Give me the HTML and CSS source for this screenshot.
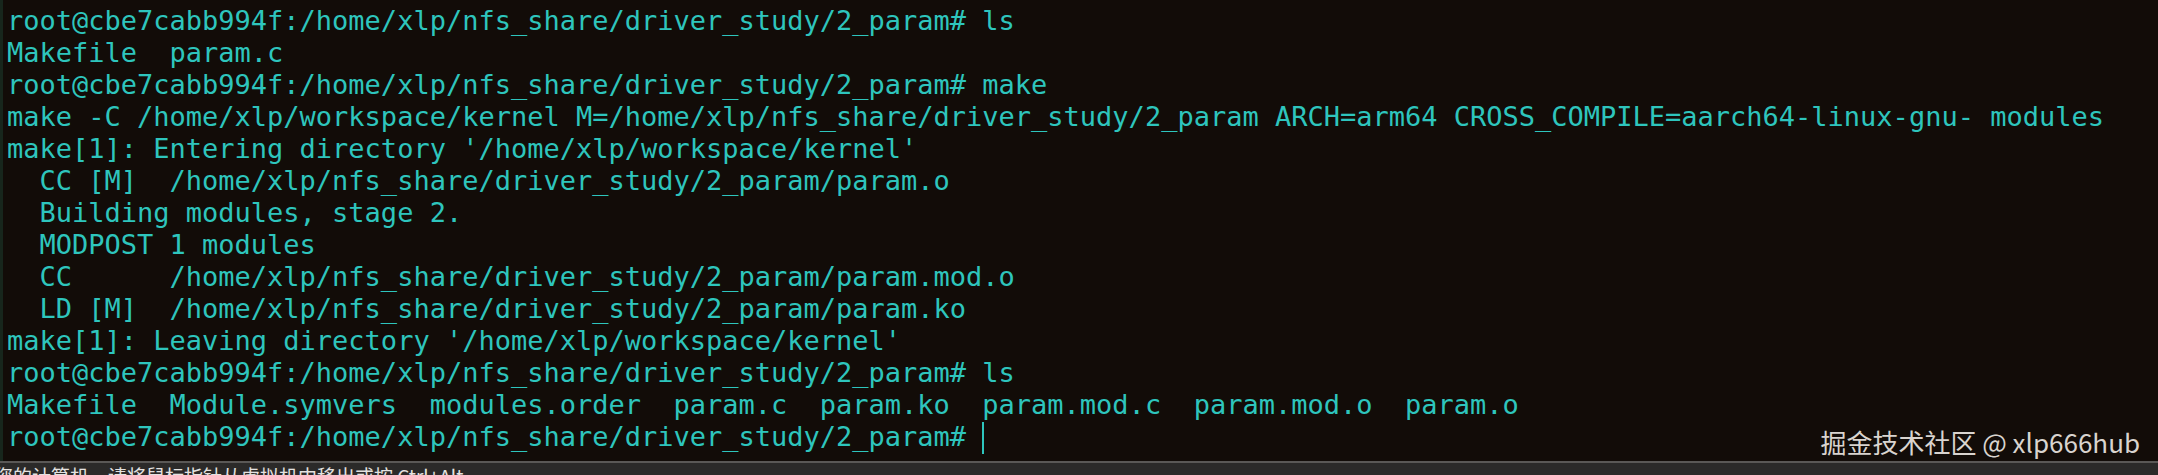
FILE: index.html
```html
<!DOCTYPE html>
<html lang="zh-CN">
<head>
<meta charset="utf-8">
<title>terminal</title>
<link rel="stylesheet" href="styles.css">
</head>
<body>
<div class="screen">
  <div class="terminal">
    <div class="line">root@cbe7cabb994f:/home/xlp/nfs_share/driver_study/2_param# ls</div>
    <div class="line">Makefile  param.c</div>
    <div class="line">root@cbe7cabb994f:/home/xlp/nfs_share/driver_study/2_param# make</div>
    <div class="line">make -C /home/xlp/workspace/kernel M=/home/xlp/nfs_share/driver_study/2_param ARCH=arm64 CROSS_COMPILE=aarch64-linux-gnu- modules</div>
    <div class="line">make[1]: Entering directory '/home/xlp/workspace/kernel'</div>
    <div class="line">  CC [M]  /home/xlp/nfs_share/driver_study/2_param/param.o</div>
    <div class="line">  Building modules, stage 2.</div>
    <div class="line">  MODPOST 1 modules</div>
    <div class="line">  CC      /home/xlp/nfs_share/driver_study/2_param/param.mod.o</div>
    <div class="line">  LD [M]  /home/xlp/nfs_share/driver_study/2_param/param.ko</div>
    <div class="line">make[1]: Leaving directory '/home/xlp/workspace/kernel'</div>
    <div class="line">root@cbe7cabb994f:/home/xlp/nfs_share/driver_study/2_param# ls</div>
    <div class="line">Makefile  Module.symvers  modules.order  param.c  param.ko  param.mod.c  param.mod.o  param.o</div>
    <div class="line">root@cbe7cabb994f:/home/xlp/nfs_share/driver_study/2_param# <span class="cursor"></span></div>
    <div class="watermark">掘金技术社区 @ xlp666hub</div>
  </div>
  <div class="statusbar"><span class="status-text">您的计算机，请将鼠标指针从虚拟机中移出或按 Ctrl+Alt。</span></div>
</div>
</body>
</html>
```

FILE: styles.css
```css
html, body {
  margin: 0;
  padding: 0;
  background: #120c08;
  overflow: hidden;
}

.screen {
  width: 2158px;
  height: 475px;
  display: flex;
  flex-direction: column;
  overflow: hidden;
}

.terminal {
  position: relative;
  height: 461px;
  box-sizing: border-box;
  padding: 5px 0 0 4px;
  border-left: 3px solid #17261c;
  background: #120c08;
  color: #2ec5bd;
  font-family: "DejaVu Sans Mono", "Liberation Mono", monospace;
  font-size: 27px;
  line-height: 32px;
}

.line {
  white-space: pre;
  height: 32px;
}

.cursor {
  display: inline-block;
  width: 2px;
  height: 32px;
  background: #2ec5bd;
  vertical-align: top;
  margin-top: 1px;
}

.watermark {
  position: absolute;
  right: 18px;
  top: 425px;
  font-family: "Noto Sans CJK SC", "Noto Sans", sans-serif;
  font-size: 26px;
  line-height: 34px;
  color: #d9d4cf;
}

.statusbar {
  flex: 1;
  border-top: 2px solid #5a5856;
  background: #2b2a29;
  overflow: hidden;
  padding-top: 1px;
}

.status-text {
  display: block;
  margin-left: -6px;
  white-space: nowrap;
  font-family: "Noto Sans CJK SC", "Noto Sans", sans-serif;
  font-size: 19px;
  line-height: 24px;
  color: #e4e2e0;
}
```
